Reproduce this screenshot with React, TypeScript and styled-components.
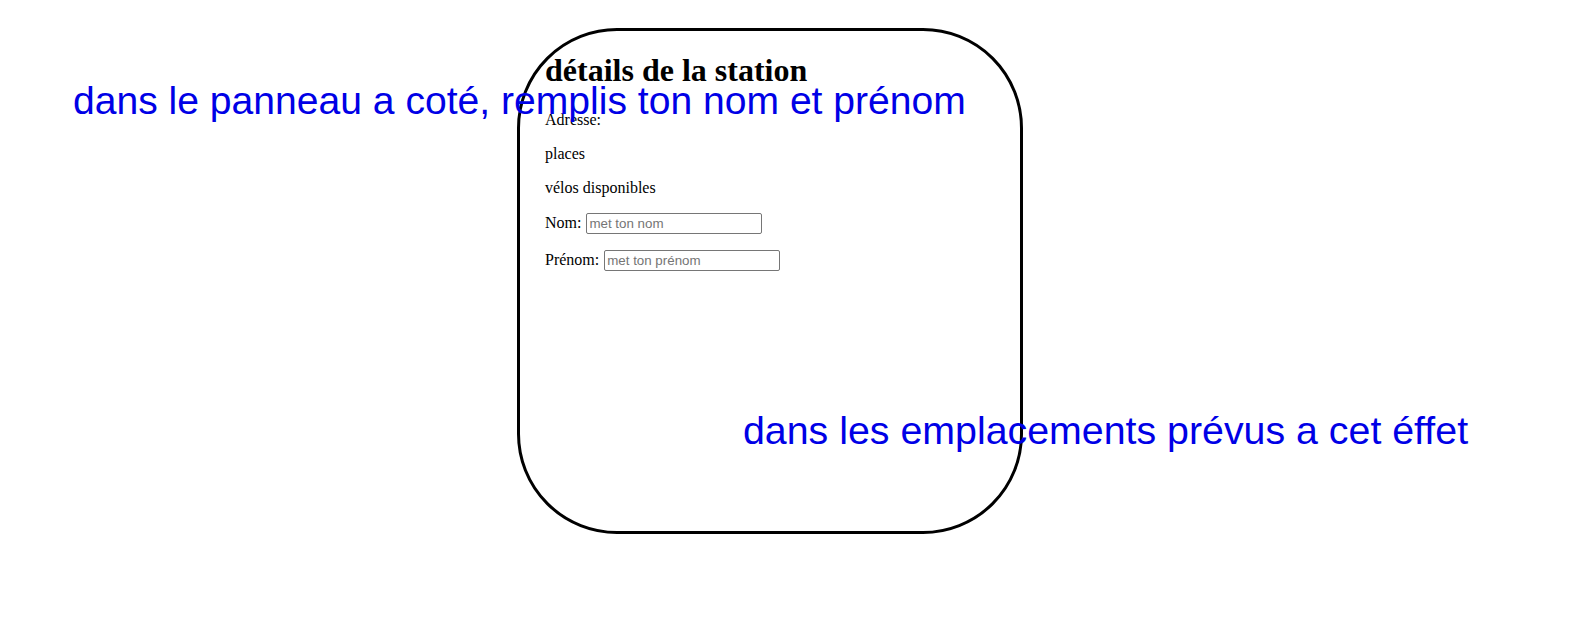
import React from 'react';
import styled, { createGlobalStyle } from 'styled-components';

const GlobalStyle = createGlobalStyle`
  body {
    margin: 8px;
    background: #ffffff;
    font-family: 'Liberation Serif', 'Times New Roman', serif;
    color: #000000;
  }
`;

export default function App() {
  return (
    <>
      <GlobalStyle />
      <Page>
        <MapArea />
        <StationPanel>
          <PanelTitle>détails de la station</PanelTitle>
          <Info>Adresse:</Info>
          <Info>places</Info>
          <Info>vélos disponibles</Info>
          <Info>
            <Label htmlFor="nom">Nom:</Label> <TextField id="nom" placeholder="met ton nom" />
          </Info>
          <Info>
            <Label htmlFor="prenom">Prénom:</Label>{' '}
            <TextField id="prenom" placeholder="met ton prénom" />
          </Info>
        </StationPanel>

        <Hint $left={65} $top={71} $size={39.1}>
          dans le panneau a coté, remplis ton nom et prénom
        </Hint>
        <Hint $left={735} $top={400} $size={39.35}>
          dans les emplacements prévus a cet éffet
        </Hint>
      </Page>
    </>
  );
}

const Page = styled.div`
  position: relative;
  display: flex;
  padding-top: 20px;
  height: 600px;
`;

const MapArea = styled.div`
  width: 509px;
  flex-shrink: 0;
`;

const StationPanel = styled.section`
  width: 450px;
  height: 500px;
  padding: 0 25px;
  border: 3px solid #000;
  border-radius: 100px;
`;

const PanelTitle = styled.h1`
  font-size: 32px;
  font-weight: bold;
  margin: 0.67em 0;
`;

const Info = styled.p`
  font-size: 16px;
  margin: 16px 0;
`;

const Label = styled.label`
  margin-right: 1px;
`;

const TextField = styled.input`
  width: 170px;
  height: 17px;
  padding: 1px 2px;
  border: 1px solid #767676;
  border-radius: 2px;
  font-family: 'Liberation Sans', Arial, sans-serif;
  font-size: 13.33px;

  &::placeholder {
    color: #757575;
  }
`;

const Hint = styled.div<{ $left: number; $top: number; $size: number }>`
  position: absolute;
  left: ${(p) => p.$left}px;
  top: ${(p) => p.$top}px;
  font-family: 'Liberation Sans', Arial, sans-serif;
  font-size: ${(p) => p.$size}px;
  color: #0000e6;
  white-space: nowrap;
`;
